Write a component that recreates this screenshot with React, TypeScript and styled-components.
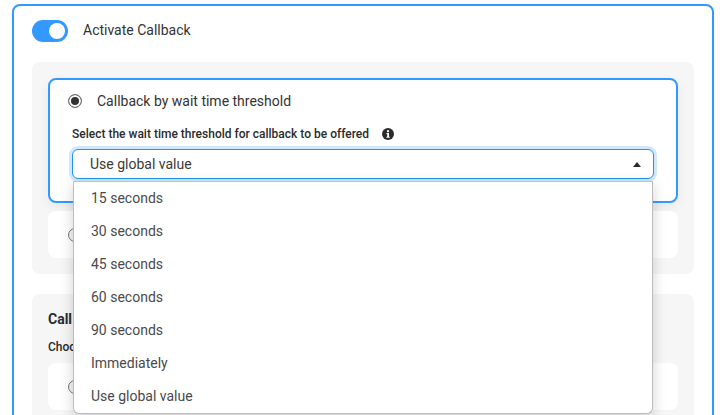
import * as React from "react";
import styled, { createGlobalStyle } from "styled-components";

const options = ["15 seconds", "30 seconds", "45 seconds", "60 seconds", "90 seconds", "Immediately", "Use global value"];

export default function App() {
	return (
		<>
			<GlobalStyle />
			<Page>
				<Card>
					<ToggleRow>
						<Toggle>
							<Knob />
						</Toggle>
						<ToggleLabel>Activate Callback</ToggleLabel>
					</ToggleRow>
					<Panel>
						<OptionCard selected>
							<RadioRow>
								<Radio checked />
								<RadioLabel>Callback by wait time threshold</RadioLabel>
							</RadioRow>
							<FieldLabel>
								Select the wait time threshold for callback to be offered
								<InfoIcon viewBox="0 0 12 12">
									<circle cx="6" cy="6" r="6" fill="#2b2b2b" />
									<rect x="5" y="2.2" width="2" height="1.9" fill="#fff" />
									<path d="M4.4 5h2.6v3.7h.8v1H4.4v-1h.8V6h-.8z" fill="#fff" />
								</InfoIcon>
							</FieldLabel>
							<SelectWrap>
								<Select>
									Use global value
									<Caret />
								</Select>
								<Menu>
									{options.map(o => (
										<MenuItem key={o}>{o}</MenuItem>
									))}
								</Menu>
							</SelectWrap>
						</OptionCard>
						<OptionCard>
							<RadioRow>
								<Radio />
							</RadioRow>
						</OptionCard>
					</Panel>
					<Panel>
						<PanelTitle>Call</PanelTitle>
						<SubLabel>Choo</SubLabel>
						<OptionCard>
							<RadioRow>
								<Radio />
							</RadioRow>
						</OptionCard>
					</Panel>
				</Card>
			</Page>
		</>
	);
}

const GlobalStyle = createGlobalStyle`
	html, body {
		margin: 0;
		height: 100%;
		overflow: hidden;
		background: #fff;
	}
	* {
		box-sizing: border-box;
	}
`;
const Page = styled.div`
	height: 415px;
	overflow: hidden;
	padding: 4px 6px 0 12px;
	font-family: Roboto, "Liberation Sans", sans-serif;
	color: #333;
`;
const Card = styled.div`
	border: 2px solid #3399ff;
	border-radius: 8px;
	padding: 14px 18px 18px;
	background: #fff;
`;
const ToggleRow = styled.div`
	display: flex;
	align-items: center;
	height: 22px;
	margin-bottom: 20px;
`;
const Toggle = styled.div`
	display: flex;
	align-items: center;
	justify-content: flex-end;
	width: 36px;
	height: 22px;
	padding-right: 3px;
	border-radius: 11px;
	background: #3399ff;
`;
const Knob = styled.div`
	width: 16px;
	height: 16px;
	border-radius: 50%;
	background: #fff;
`;
const ToggleLabel = styled.span`
	margin-left: 15px;
	font-size: 14px;
	position: relative;
	top: -1px;
`;
const Panel = styled.div`
	display: flex;
	flex-direction: column;
	gap: 8px;
	padding: 16px;
	margin-bottom: 20px;
	border-radius: 8px;
	background: #f6f6f6;
`;
const OptionCard = styled.div<{ selected?: boolean }>`
	flex: none;
	height: ${({ selected }) => (selected ? "125px" : "47px")};
	padding: ${({ selected }) => (selected ? "10px 22px 0 18px" : "13px 20px 0 20px")};
	border-radius: 8px;
	background: #fff;
	border: ${({ selected }) => (selected ? "2px solid #3399ff" : "none")};
	box-shadow: ${({ selected }) => (selected ? "0 4px 12px rgba(0, 0, 0, 0.06)" : "none")};
`;
const RadioRow = styled.div`
	display: flex;
	align-items: center;
	height: 21px;
`;
const Radio = styled.span<{ checked?: boolean }>`
	display: inline-block;
	flex: none;
	width: 14px;
	height: 14px;
	border-radius: 50%;
	border: 1px solid #777;
	background: ${({ checked }) => (checked ? "#333" : "#f4f4f4")};
	box-shadow: ${({ checked }) => (checked ? "inset 0 0 0 2px #fff" : "none")};
`;
const RadioLabel = styled.span`
	margin-left: 15px;
	font-size: 14px;
`;
const FieldLabel = styled.div`
	display: flex;
	align-items: center;
	height: 16px;
	margin: 15px 0 0 4px;
	font-size: 12px;
	font-weight: 500;
	color: #2b2b2b;
`;
const InfoIcon = styled.svg`
	width: 12px;
	height: 12px;
	margin-left: 13px;
`;
const SelectWrap = styled.div`
	position: relative;
	margin: 7px 0 0 4px;
`;
const Select = styled.div`
	display: flex;
	align-items: center;
	justify-content: space-between;
	height: 30px;
	padding: 0 12px 0 17px;
	border: 1px solid #2196e8;
	border-radius: 6px;
	background: #fff;
	box-shadow: 0 0 0 3px #cfe8ff;
	font-size: 14px;
	color: #3a3a3a;
`;
const Caret = styled.span`
	width: 0;
	height: 0;
	border-left: 4.5px solid transparent;
	border-right: 4.5px solid transparent;
	border-bottom: 5px solid #2b2b2b;
`;
const Menu = styled.div`
	position: absolute;
	top: 32px;
	left: 1px;
	right: 1px;
	z-index: 5;
	height: 233px;
	background: #fff;
	border: 1px solid #bdbdbd;
	border-top-color: #c4c4c4;
	border-radius: 0 0 6px 6px;
	box-shadow: 0 4px 14px rgba(0, 0, 0, 0.18);

	& > :first-child {
		margin-top: -1px;
	}
`;
const MenuItem = styled.div`
	display: flex;
	align-items: center;
	height: 33px;
	padding-left: 17px;
	font-size: 14px;
	color: #4a4a4a;
`;
const PanelTitle = styled.div`
	height: 18px;
	line-height: 18px;
	font-size: 14px;
	font-weight: 700;
	color: #2b2b2b;
`;
const SubLabel = styled.div`
	height: 15px;
	line-height: 15px;
	margin-top: 4px;
	font-size: 12px;
	font-weight: 500;
	color: #2b2b2b;
`;
